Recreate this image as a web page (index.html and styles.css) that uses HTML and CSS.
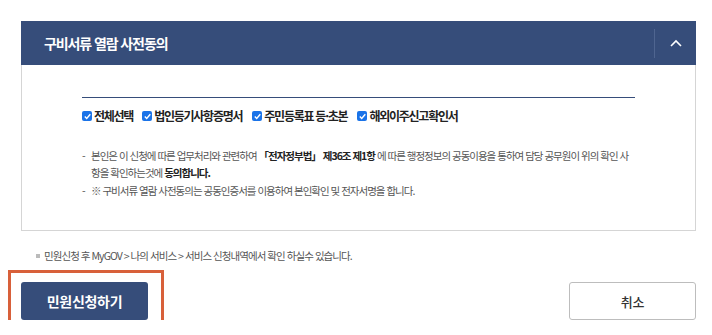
FILE: index.html
```html
<!DOCTYPE html>
<html lang="ko">
<head>
<meta charset="utf-8">
<link rel="stylesheet" href="styles.css">
</head>
<body>
<div class="page">
  <section class="panel">
    <div class="panel-head">
      <h2 class="panel-title">구비서류 열람 사전동의</h2>
      <button class="toggle" type="button" aria-label="접기">
        <svg width="12" height="8" viewBox="0 0 12 8"><path d="M1 7 L6 2 L11 7" fill="none" stroke="#fff" stroke-width="1.6"/></svg>
      </button>
    </div>
    <div class="panel-body">
      <div class="checks">
        <label class="check"><span class="box"><svg width="9" height="9" viewBox="0 0 9 9"><path d="M1.8 4.6 L3.7 6.5 L7.3 2.3" fill="none" stroke="#fff" stroke-width="1.4"/></svg></span>전체선택</label>
        <label class="check"><span class="box"><svg width="9" height="9" viewBox="0 0 9 9"><path d="M1.8 4.6 L3.7 6.5 L7.3 2.3" fill="none" stroke="#fff" stroke-width="1.4"/></svg></span>법인등기사항증명서</label>
        <label class="check"><span class="box"><svg width="9" height="9" viewBox="0 0 9 9"><path d="M1.8 4.6 L3.7 6.5 L7.3 2.3" fill="none" stroke="#fff" stroke-width="1.4"/></svg></span>주민등록표 등·초본</label>
        <label class="check"><span class="box"><svg width="9" height="9" viewBox="0 0 9 9"><path d="M1.8 4.6 L3.7 6.5 L7.3 2.3" fill="none" stroke="#fff" stroke-width="1.4"/></svg></span>해외이주신고확인서</label>
      </div>
      <ul class="agree">
        <li>본인은 이 신청에 따른 업무처리와 관련하여 <b>「전자정부법」 제36조 제1항</b> 에 따른 행정정보의 공동이용을 통하여 담당 공무원이 위의 확인 사항을 확인하는것에 <b>동의합니다.</b></li>
        <li>※ 구비서류 열람 사전동의는 공동인증서를 이용하여 본인확인 및 전자서명을 합니다.</li>
      </ul>
    </div>
  </section>
  <p class="note">민원신청 후 MyGOV &gt; 나의 서비스 &gt; 서비스 신청내역에서 확인 하실수 있습니다.</p>
  <div class="actions">
    <div class="submit-wrap">
      <button class="btn btn-primary" type="button">민원신청하기</button>
      <span class="highlight"></span>
    </div>
    <button class="btn btn-cancel" type="button">취소</button>
  </div>
</div>
</body>
</html>
```
FILE: styles.css
```css
* { box-sizing: border-box; }
html, body { margin: 0; padding: 0; background: #fff; }
body {
  font-family: "Noto Sans CJK KR", "Noto Sans", sans-serif;
  color: #333;
}
.page {
  width: 712px;
  padding: 21px 16px 0 21px;
}
.panel { width: 675px; }
.panel-head {
  height: 44px;
  background: #364d7a;
  display: flex;
  align-items: center;
  justify-content: space-between;
}
.panel-title {
  margin: 0 0 0 23px;
  font-size: 14px;
  font-weight: 700;
  color: #fff;
  letter-spacing: -1.1px;
}
.toggle {
  width: 42px;
  height: 29px;
  border: 0;
  border-left: 1px solid #4f6590;
  background: transparent;
  padding: 0;
  display: flex;
  align-items: center;
  justify-content: center;
}
.panel-body {
  border: 1px solid #d5d5d5;
  border-top: 0;
  height: 166px;
  padding: 32px 60px 0 60px;
}
.checks {
  border-top: 1px solid #364d7a;
  padding-top: 10px;
  display: flex;
  gap: 9px;
}
.check {
  display: flex;
  align-items: center;
  gap: 2px;
  font-size: 12px;
  font-weight: 700;
  color: #222;
  letter-spacing: -1.25px;
  line-height: 16px;
}
.check:nth-child(3), .check:nth-child(4) { margin-left: 1px; }
.box {
  width: 10px;
  height: 10px;
  background: #1a73e8;
  border-radius: 2px;
  display: flex;
  align-items: center;
  justify-content: center;
}
.agree {
  list-style: none;
  margin: 24px 0 0 0;
  padding: 0;
  font-size: 10.5px;
  color: #555;
  letter-spacing: -1px;
  line-height: 16.5px;
  word-break: break-all;
}
.agree li {
  position: relative;
  padding-left: 9px;
  margin-bottom: 1.5px;
}
.agree li::before {
  content: "-";
  position: absolute;
  left: 0;
  top: 0;
}
.agree b { color: #222; font-weight: 700; }
.note {
  margin: 18px 0 0 15px;
  padding-left: 8px;
  position: relative;
  font-size: 10.5px;
  color: #555;
  letter-spacing: -0.95px;
  line-height: 14px;
}
.note::before {
  content: "";
  position: absolute;
  left: 0;
  top: 5px;
  width: 4px;
  height: 4px;
  background: #bbb;
}
.actions {
  margin-top: 19px;
  width: 675px;
  display: flex;
  justify-content: space-between;
}
.submit-wrap { position: relative; }
.btn {
  width: 127px;
  height: 38px;
  border-radius: 3px;
  font-family: inherit;
  letter-spacing: -0.3px;
  cursor: pointer;
}
.btn-primary {
  background: #364d7a;
  border: 0;
  color: #fff;
  font-size: 14px;
  font-weight: 700;
}
.btn-cancel {
  background: #fff;
  border: 1px solid #bdbdbd;
  color: #333;
  font-size: 13px;
  font-weight: 500;
}
.highlight {
  position: absolute;
  left: -13px;
  top: -12px;
  width: 156px;
  height: 59px;
  border: 3px solid #d8603a;
  pointer-events: none;
}
```
